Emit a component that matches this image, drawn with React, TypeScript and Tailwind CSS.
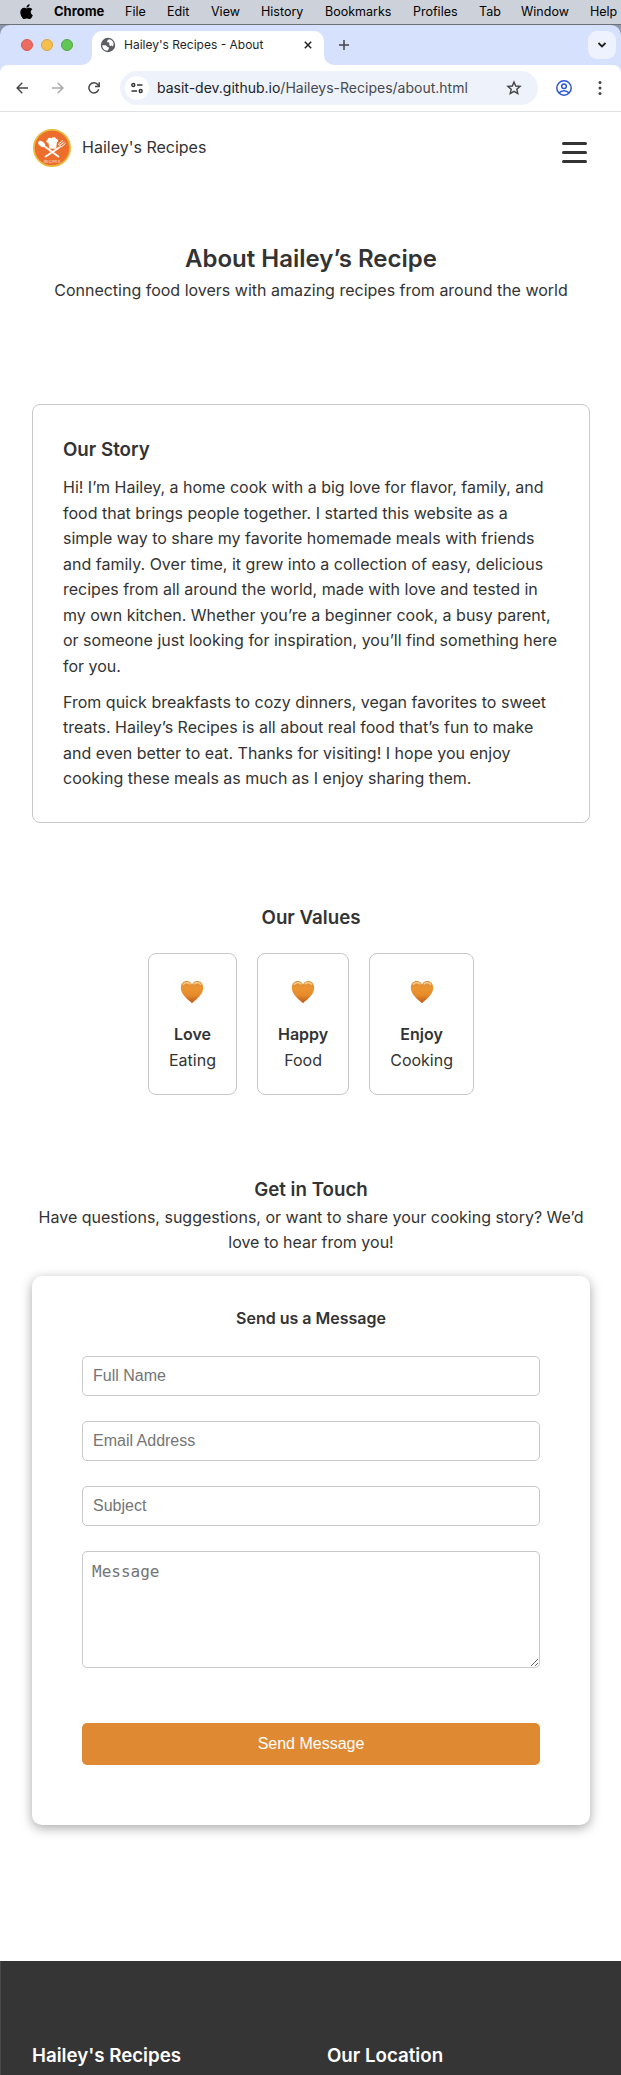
import React from "react";

const menuItems = [
  { label: "File", w: "w-[42px]" },
  { label: "Edit", w: "w-[44px]" },
  { label: "View", w: "w-[50px]" },
  { label: "History", w: "w-[64px]" },
  { label: "Bookmarks", w: "w-[88px]" },
  { label: "Profiles", w: "w-[66px]" },
  { label: "Tab", w: "w-[42px]" },
  { label: "Window", w: "w-[69px]" },
  { label: "Help", w: "w-[31px]" },
];

function AppleIcon() {
  return (
    <svg width="13" height="16" viewBox="0 0 384 480" fill="#000">
      <path d="M319 241c0-37 17-65 50-85-19-27-47-42-84-45-36-3-74 21-88 21-15 0-49-20-76-20C65 113 6 157 6 246c0 26 5 54 14 82 13 37 59 127 107 125 25-1 43-18 75-18 32 0 48 18 76 18 49-1 91-83 103-119-65-31-62-91-62-93zM262 76c27-32 25-62 24-72-24 1-52 16-68 35-18 20-28 45-26 72 26 2 50-11 70-35z" />
    </svg>
  );
}

function MenuBar() {
  return (
    <div className="flex h-6 shrink-0 items-center bg-[#cdd1da] text-[12.5px] text-black">
      <div className="flex w-[54px] shrink-0 pl-[20px]"><AppleIcon /></div>
      <span className="w-[71px] shrink-0 text-[13px] font-bold">Chrome</span>
      {menuItems.map((m) => (
        <span key={m.label} className={`${m.w} shrink-0 whitespace-nowrap`}>{m.label}</span>
      ))}
    </div>
  );
}

function GlobeIcon() {
  return (
    <svg width="16" height="16" viewBox="0 0 16 16">
      <circle cx="8" cy="8" r="7.200" fill="#5a5e63" />
      <path d="M2.300 8.200l3 .1c1.600.2 1.300 1.600 2.600 1.700 1.300.2 1.200 1.400.6 2.200l-1 1.500C4.200 13.500 2.200 11 2.300 8.200zM8.700 2.300c-.3 1-1.800 1-1.500 2.400.2 1 1.700.4 2.100 1.300.3.9-.4 1.600.3 2.400.9.900 2.300.2 3.400.9C14.600 5.800 12.500 2.500 8.700 2.300z" fill="#fff" />
    </svg>
  );
}

function TabStrip() {
  return (
    <div className="flex h-10 items-start rounded-t-[10px] bg-[#d6e2fd]">
      <div className="flex w-[92px] shrink-0 gap-2 pl-[21px] pt-[14px]">
        <i className="size-3 rounded-full border border-[#d6594e] bg-[#ed6b60]" />
        <i className="size-3 rounded-full border border-[#dba539] bg-[#f5bf4f]" />
        <i className="size-3 rounded-full border border-[#4fa73b] bg-[#62c655]" />
      </div>
      <div className="relative flex h-[34px] w-[232px] shrink-0 items-center self-end rounded-t-[10px] bg-white pl-2 pb-[6px]">
        <svg className="absolute -left-[10px] bottom-0" width="10" height="10"><path d="M10 0v10H0A10 10 0 0 0 10 0z" fill="#fff" /></svg>
        <svg className="absolute -right-[10px] bottom-0" width="10" height="10"><path d="M0 0v10h10A10 10 0 0 1 0 0z" fill="#fff" /></svg>
        <GlobeIcon />
        <span className="ml-2 flex-1 text-[12px] text-[#1f1f1f]">Hailey's Recipes - About</span>
        <svg className="mr-[12px]" width="8" height="8" viewBox="0 0 8 8"><path d="M.8.8l6.400 6.400M7.200.8L.8 7.200" stroke="#222" strokeWidth="1.500" /></svg>
      </div>
      <svg className="ml-[14px] mt-[14px]" width="12" height="12"><path d="M6 1v10M1 6h10" stroke="#444" strokeWidth="1.500" /></svg>
      <div className="ml-auto mr-[5px] mt-[6px] flex size-7 items-center justify-center rounded-[9px] bg-[#edf2fe]">
        <svg width="10" height="8"><path d="M1.500 2l3.500 3.500L8.500 2" fill="none" stroke="#1f1f1f" strokeWidth="1.800" /></svg>
      </div>
    </div>
  );
}

function Toolbar() {
  return (
    <div className="bg-[#d6e2fd]">
      <div className="flex h-[47px] items-center rounded-t-[8px] border-b border-[#dfe1e4] bg-white">
        <svg className="ml-4" width="12" height="12" viewBox="0 0 12 12" fill="none" stroke="#474747" strokeWidth="1.400"><path d="M12 6H1.200M6.300.8L1.100 6l5.200 5.200" /></svg>
        <svg className="ml-6" width="12" height="12" viewBox="0 0 12 12" fill="none" stroke="#a9a9a9" strokeWidth="1.400"><path d="M0 6h10.800M5.700.8L10.900 6l-5.200 5.200" /></svg>
        <svg className="ml-6" width="12" height="12" viewBox="0 0 12 12" fill="none" stroke="#474747" strokeWidth="1.500"><path d="M10.700 7.300A5 5 0 1 1 9.700 2.600L11 4M11.200.2v4.200H7" /></svg>
        <div className="ml-5 flex h-[34px] w-[418px] items-center rounded-full bg-[#edf2fb]">
          <div className="ml-[5px] flex size-6 items-center justify-center rounded-full bg-white">
            <svg width="12" height="12" viewBox="0 0 12 12" fill="none" stroke="#333" strokeWidth="1.400"><circle cx="2.300" cy="3" r="1.500" /><path d="M6 3h5.500M.5 9H6" /><circle cx="9.700" cy="9" r="1.500" /></svg>
          </div>
          <span className="ml-2 whitespace-nowrap text-[14px] text-[#202124]">basit-dev.github.io<span className="text-[#47494d]">/Haileys-Recipes/about.html</span></span>
          <svg className="ml-auto mr-4" width="16" height="16" viewBox="0 0 16 16" fill="none" stroke="#444" strokeWidth="1.400"><path d="M8 2l1.700 4 4.400.4-3.300 2.900 1 4.200L8 11.300l-3.800 2.200 1-4.200-3.300-2.900L6.300 6z" /></svg>
        </div>
        <svg className="ml-[17px]" width="18" height="18" viewBox="0 0 18 18" fill="none" stroke="#2c56d3" strokeWidth="1.500"><circle cx="9" cy="9" r="7.200" /><circle cx="9" cy="7.300" r="2.300" /><path d="M4 14c2.500-3 7.500-3 10 0" /></svg>
        <svg className="ml-[25px]" width="4" height="16" fill="#444"><circle cx="2" cy="2.500" r="1.500" /><circle cx="2" cy="8" r="1.500" /><circle cx="2" cy="13.500" r="1.500" /></svg>
      </div>
    </div>
  );
}

function Logo() {
  return (
    <svg width="38" height="38" viewBox="0 0 38 38">
      <circle cx="19" cy="19" r="18.100" fill="#ed6d2d" stroke="#e9b93a" strokeWidth="1.800" />
      <g fill="#fff" stroke="#fff">
        <path d="M14.500 11c0-2.500 2.700-3 4-1.500 1-1.800 4-1.500 4.500.2 2.500 0 2.500 3 .8 4l-.6 6h-7l-.6-5.500c-2.500-.3-3-3-1.100-3.200z" stroke="none" />
        <ellipse cx="8.700" cy="15" rx="4" ry="2.400" transform="rotate(38 8.700 15)" stroke="none" />
        <path d="M11 17l15 11M27 18L12 28" strokeWidth="1.800" />
        <path d="M25.500 15l4.500-3.500M26.500 16.500l5-3.500M28 18l4.500-3.500M25.500 15l2.500 3" strokeWidth="1" fill="none" />
      </g>
      <text x="19" y="33.500" fill="#fff" fillOpacity=".8" fontSize="4" textAnchor="middle" fontFamily="Inter, sans-serif">RECIPES</text>
    </svg>
  );
}

function Heart() {
  return (
    <svg width="24" height="24" viewBox="0 0 24 24">
      <defs>
        <linearGradient id="heart" x1="0" y1="0" x2="0" y2="1">
          <stop offset="0" stopColor="#d98e3c" />
          <stop offset=".35" stopColor="#ec9431" />
          <stop offset=".65" stopColor="#e58a2b" />
          <stop offset="1" stopColor="#bd5516" />
        </linearGradient>
      </defs>
      <path d="M12 23.300C9.500 20.500 .8 15.500.8 7.800.8 3.600 3.600 1 6.800 1c2.400 0 4.300 1.300 5.200 3.500C12.900 2.300 14.800 1 17.200 1c3.200 0 6 2.600 6 6.800 0 7.700-8.700 12.700-11.200 15.500z" fill="url(#heart)" />
      <path d="M3.500 4.200C5 2.500 8 2.200 9.800 3.800M14.200 3.800C16 2.200 19 2.500 20.500 4.200" fill="none" stroke="#fbdca0" strokeOpacity=".8" strokeWidth="1.600" strokeLinecap="round" />
    </svg>
  );
}

const values = [
  { title: "Love", text: "Eating" },
  { title: "Happy", text: "Food" },
  { title: "Enjoy", text: "Cooking" },
];

const fieldClass =
  "block h-10 w-full rounded-[5px] border border-[#c8c8c8] bg-white px-[10px] font-['Liberation_Sans',Arial,sans-serif] text-[16px] placeholder:text-[#757575]";

export default function App() {
  return (
    <div className="flex h-[2075px] w-[621px] flex-col overflow-hidden bg-white font-['Inter',sans-serif] text-[16px] leading-[25.5px] text-[#333]">
      <MenuBar />
      <div className="h-px shrink-0 bg-[#6d7077]" />
      <div className="bg-[#8d98ad]"><TabStrip /></div>
      <Toolbar />
      <header className="flex h-[71px] shrink-0 items-center justify-between px-[33px]">
        <div className="flex items-center gap-[11px]">
          <Logo />
          <span>Hailey's Recipes</span>
        </div>
        <button aria-label="Menu" className="mr-[1px] mt-[9px] flex w-[25px] flex-col gap-[6px]">
          <i className="h-[3px] rounded-full bg-[#333]" />
          <i className="h-[3px] rounded-full bg-[#333]" />
          <i className="h-[3px] rounded-full bg-[#333]" />
        </button>
      </header>
      <main className="flex flex-col pl-[32px] pr-[31px]">
        <section className="mt-[57px] h-[64px] text-center">
          <h1 className="text-[24px] font-semibold leading-[38.400px]">About Hailey’s Recipe</h1>
          <p>Connecting food lovers with amazing recipes from around the world</p>
        </section>
        <section className="mt-[100px] h-[419px] rounded-lg border border-[#c8c8c8] px-[30px] pt-[30px]">
          <h2 className="text-[18.72px] font-semibold leading-[30px]">Our Story</h2>
          <p className="mt-[10px]">Hi! I’m Hailey, a home cook with a big love for flavor, family, and food that brings people together. I started this website as a simple way to share my favorite homemade meals with friends and family. Over time, it grew into a collection of easy, delicious recipes from all around the world, made with love and tested in my own kitchen. Whether you’re a beginner cook, a busy parent, or someone just looking for inspiration, you’ll find something here for you.</p>
          <p className="mt-[10.5px]">From quick breakfasts to cozy dinners, vegan favorites to sweet treats. Hailey’s Recipes is all about real food that’s fun to make and even better to eat. Thanks for visiting! I hope you enjoy cooking these meals as much as I enjoy sharing them.</p>
        </section>
        <section className="mt-[80px] flex flex-col items-center">
          <h2 className="text-[18.72px] font-semibold leading-[30px]">Our Values</h2>
          <div className="mt-5 flex gap-5">
            {values.map((v) => (
              <div key={v.title} className="flex h-[142px] flex-col items-center rounded-lg border border-[#c8c8c8] px-5 pt-[26px]">
                <Heart />
                <h3 className="mt-[18px] font-semibold">{v.title}</h3>
                <p>{v.text}</p>
              </div>
            ))}
          </div>
        </section>
        <section className="mt-[80px] text-center">
          <h2 className="text-[18.72px] font-semibold leading-[30px]">Get in Touch</h2>
          <p className="-mt-[0.5px] mb-[0.5px]">Have questions, suggestions, or want to share your cooking story? We’d love to hear from you!</p>
          <form className="mt-5 flex h-[549px] flex-col rounded-[10px] px-[50px] pt-[30px] shadow-[0_3px_12px_rgba(0,0,0,0.35)]">
            <h3 className="mb-[24.500px] font-semibold">Send us a Message</h3>
            <input className={fieldClass} placeholder="Full Name" />
            <input className={`${fieldClass} mt-[25px]`} placeholder="Email Address" />
            <input className={`${fieldClass} mt-[25px]`} placeholder="Subject" />
            <textarea className="mt-[25px] block h-[117px] w-full rounded-[5px] border border-[#c8c8c8] bg-white p-[10px] pl-[9px] font-['DejaVu_Sans_Mono',monospace] text-[16px] leading-[19px] placeholder:text-[#757575]" placeholder="Message" />
            <button className="mt-[55px] h-[42px] rounded-[5px] bg-[#df8a32] font-['Liberation_Sans',Arial,sans-serif] text-white">Send Message</button>
          </form>
        </section>
      </main>
      <footer className="mt-auto flex h-[114px] shrink-0 border-l border-[#4a4a4a] bg-[#353535] pl-[31px] pt-[80px] text-[18.72px] font-semibold leading-[30px] text-white">
        <h2 className="w-[295px]">Hailey's Recipes</h2>
        <h2>Our Location</h2>
      </footer>
    </div>
  );
}
